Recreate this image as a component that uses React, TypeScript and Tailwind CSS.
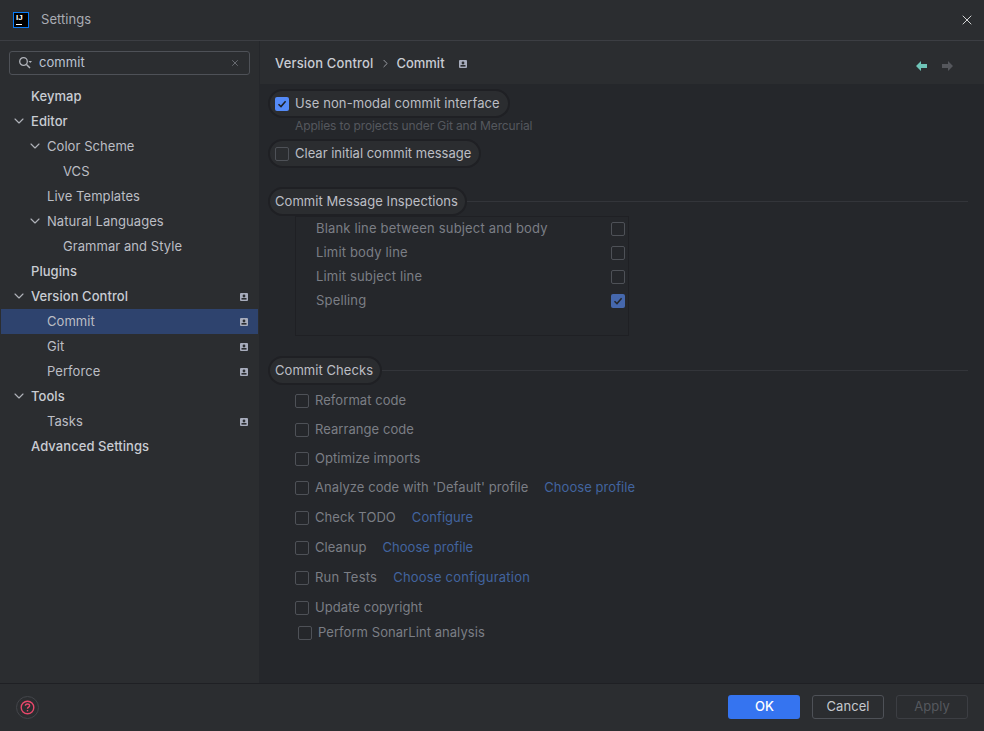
import React from 'react'
import { ChevronDown, ChevronRight, X } from 'lucide-react'

const sidebarRows = [
  { label: 'Keymap', depth: 0, bold: true },
  { label: 'Editor', depth: 0, bold: true, open: true },
  { label: 'Color Scheme', depth: 1, open: true },
  { label: 'VCS', depth: 2 },
  { label: 'Live Templates', depth: 1 },
  { label: 'Natural Languages', depth: 1, open: true },
  { label: 'Grammar and Style', depth: 2 },
  { label: 'Plugins', depth: 0, bold: true },
  { label: 'Version Control', depth: 0, bold: true, open: true, badge: true },
  { label: 'Commit', depth: 1, badge: true, selected: true },
  { label: 'Git', depth: 1, badge: true },
  { label: 'Perforce', depth: 1, badge: true },
  { label: 'Tools', depth: 0, bold: true, open: true },
  { label: 'Tasks', depth: 1, badge: true },
  { label: 'Advanced Settings', depth: 0, bold: true },
]

const inspections = [
  { label: 'Blank line between subject and body' },
  { label: 'Limit body line' },
  { label: 'Limit subject line' },
  { label: 'Spelling', checked: true },
]

const checks = [
  { label: 'Reformat code', h: 'h-[29px]' },
  { label: 'Rearrange code', h: 'h-[29px]' },
  { label: 'Optimize imports', h: 'h-[29px]' },
  { label: "Analyze code with 'Default' profile", link: 'Choose profile', h: 'h-[30px]' },
  { label: 'Check TODO', link: 'Configure', h: 'h-[30px]' },
  { label: 'Cleanup', link: 'Choose profile', h: 'h-[30px]' },
  { label: 'Run Tests', link: 'Choose configuration', h: 'h-[30px] tracking-[0.22px]' },
  { label: 'Update copyright', h: 'h-[29px]' },
]

function Badge() {
  return (
    <svg width="8" height="8" viewBox="0 0 8 8" className="shrink-0">
      <rect width="8" height="8" rx="1" fill="#a8adbd" />
      <circle cx="4" cy="3" r="1.4" fill="#2b2d30" />
      <rect x="1.5" y="5" width="5" height="1.6" fill="#2b2d30" />
    </svg>
  )
}

function Checkbox({ checked, dim }: { checked?: boolean; dim?: boolean }) {
  if (checked) {
    return (
      <span className={`flex h-[14px] w-[14px] shrink-0 items-center justify-center rounded-[2px] ${dim ? 'bg-[#4668ad]' : 'bg-[#548af7]'}`}>
        <svg width="10" height="10" viewBox="0 0 10 10" fill="none">
          <path d="M1.5 5.2 L4 7.6 L8.6 2.2" stroke={dim ? '#25272b' : '#1e1f22'} strokeWidth="1.5" />
        </svg>
      </span>
    )
  }
  return <span className="h-[14px] w-[14px] shrink-0 rounded-[2px] border border-[#4e5157]" />
}

function SectionTitle({ title }: { title: string }) {
  return (
    <div className="flex items-center pl-2 pr-4">
      <span className="flex h-[29px] items-center rounded-full border-2 border-[#1f2024] bg-[#2b2d30] pl-[5px] pr-[7px] text-[#bcbec4]">{title}</span>
      <span className="h-px flex-1 bg-[#33353a]" />
    </div>
  )
}

export default function App() {
  return (
    <div className="flex h-[731px] w-[984px] flex-col overflow-hidden bg-[#2b2d30] text-[13px] tracking-[0.06px] text-[#bcbec4] [font-family:Inter,sans-serif]">
      {/* title bar */}
      <div className="flex h-[41px] shrink-0 items-center border-b border-[#3c3e43] pl-[13px] pr-[9px]">
        <span className="relative h-4 w-4 border border-[#087cfa] bg-black">
          <span className="absolute left-[2px] top-0 text-[8px] font-bold leading-[10px] text-white [font-family:'Liberation_Sans',sans-serif]">IJ</span>
          <span className="absolute bottom-[2px] left-[2px] h-px w-[6px] bg-white" />
        </span>
        <span className="ml-3 text-[#a9acb3]">Settings</span>
        <X size={16} strokeWidth={1.2} className="ml-auto text-white" />
      </div>

      <div className="flex min-h-0 flex-1">
        {/* sidebar */}
        <aside className="w-[260px] shrink-0 border-r border-[#25272b] pt-[10px]">
          <div className="mx-[9px] flex h-[24px] w-[241px] items-center rounded-[3px] border border-[#4e5157] pl-2 pr-[9px]">
            <svg width="15" height="14" viewBox="0 0 15 14" fill="none" className="shrink-0">
              <circle cx="5.5" cy="5.5" r="3.8" stroke="#b0b3ba" strokeWidth="1.3" />
              <path d="M8.5 8.5 L12 12" stroke="#b0b3ba" strokeWidth="1.5" />
              <path d="M10.5 5 H14 L12.2 7 Z" fill="#b0b3ba" />
            </svg>
            <span className="ml-[6px] text-[#bcc3d0]">commit</span>
            <X size={10} strokeWidth={1.5} className="ml-auto text-[#8c8f96]" />
          </div>
          <div className="mt-[9px]">
            {sidebarRows.map((r) => (
              <div
                key={r.label}
                className={`ml-px mr-px flex h-[25px] items-center pr-[10px] ${r.selected ? 'bg-[#2e436e]' : ''} ${r.depth === 0 ? 'pl-[30px]' : r.depth === 1 ? 'pl-[46px]' : 'pl-[62px]'}`}
              >
                <span className={`relative ${r.bold ? 'font-medium text-[#c9ccd3]' : ''}`}>
                  {r.open && (
                    <ChevronDown size={16} strokeWidth={1.7} className="absolute -left-[20px] top-[1px] text-[#b0b3ba]" />
                  )}
                  {r.label}
                </span>
                {r.badge && <span className="ml-auto"><Badge /></span>}
              </div>
            ))}
          </div>
        </aside>

        {/* main panel */}
        <main className="flex min-w-0 flex-1 flex-col bg-[#25272b]">
          <div className="flex h-[43px] shrink-0 items-center bg-[#2b2d30] pl-[15px] pr-[31px] pt-[2px]">
            <span className="font-medium tracking-[0.15px] text-[#c9ccd3]">Version Control</span>
            <ChevronRight size={13} strokeWidth={1.6} className="ml-[6px] mr-[4px] text-[#a9acb3]" />
            <span className="font-medium tracking-normal text-[#c9ccd3]">Commit</span>
            <span className="ml-[14px]"><Badge /></span>
            <span className="ml-auto flex items-center gap-[15px] pt-[5px]">
              <svg width="11" height="10" viewBox="0 0 11 10"><path d="M0 5 L5 0 V3 H11 V7 H5 V10 Z" fill="#6fc4b8" /></svg>
              <svg width="11" height="10" viewBox="0 0 11 10"><path d="M11 5 L6 0 V3 H0 V7 H6 V10 Z" fill="#55575c" /></svg>
            </span>
          </div>

          <div className="pt-[5px]">
            <div className="pl-2">
              <label className="inline-flex h-[29px] items-center gap-[6px] rounded-full border-2 border-[#1f2024] bg-[#2b2d30] pl-[5px] pr-2 tracking-[0.1px]">
                <Checkbox checked />
                Use non-modal commit interface
              </label>
            </div>
            <p className="h-[21px] pl-[35px] text-[12px] leading-[16px] tracking-[-0.12px] text-[#55585e]">Applies to projects under Git and Mercurial</p>
            <div className="pl-2">
              <label className="inline-flex h-[29px] items-center gap-[6px] rounded-full border-2 border-[#1f2024] bg-[#2b2d30] pl-[5px] pr-2 tracking-normal">
                <Checkbox />
                Clear initial commit message
              </label>
            </div>
          </div>

          <div className="mt-[19px]">
            <SectionTitle title="Commit Message Inspections" />
            <div className="ml-[35px] h-[120px] w-[334px] border border-[#1f2024] pl-5 pr-[3px]">
              {inspections.map((i) => (
                <div key={i.label} className="flex h-[24px] items-center justify-between tracking-[0.17px] text-[#7b7e85]">
                  {i.label}
                  <Checkbox checked={i.checked} dim />
                </div>
              ))}
            </div>
          </div>

          <div className="mt-[20px]">
            <SectionTitle title="Commit Checks" />
            <div className="pl-[35px] pt-px">
              {checks.map((c) => (
                <div key={c.label} className={`flex ${c.h} items-center gap-[6px] text-[#7b7e85]`}>
                  <Checkbox />
                  {c.label}
                  {c.link && <span className="ml-[10px] text-[#42649f]">{c.link}</span>}
                </div>
              ))}
              <div className="flex h-[22px] items-center gap-[6px] pl-[3px] text-[#7b7e85]">
                <Checkbox />
                Perform SonarLint analysis
              </div>
            </div>
          </div>
        </main>
      </div>

      {/* footer */}
      <div className="flex h-[48px] shrink-0 items-center border-t border-[#1f2024] pb-px pl-4 pr-4">
        <span className="flex h-[23px] w-[23px] items-center justify-center rounded-full border border-[#43454a]">
          <svg width="15" height="15" viewBox="0 0 15 15" fill="none">
            <circle cx="7.5" cy="7.5" r="6.3" stroke="#e8486b" strokeWidth="1.4" />
            <path d="M5.4 5.8 C5.4 3.4 9.6 3.4 9.6 5.7 C9.6 7.2 7.5 7 7.5 8.8" stroke="#e8486b" strokeWidth="1.4" />
            <rect x="6.8" y="10" width="1.4" height="1.4" fill="#e8486b" />
          </svg>
        </span>
        <button className="ml-auto h-[24px] w-[72px] rounded-[3px] bg-[#3574f0] pl-px font-medium text-white">OK</button>
        <button className="ml-3 h-[24px] w-[72px] rounded-[3px] border border-[#4e5157] text-[#c5c8ce]">Cancel</button>
        <button className="ml-3 h-[24px] w-[72px] rounded-[3px] border border-[#3c3e43] text-[#55585e]">Apply</button>
      </div>
    </div>
  )
}
